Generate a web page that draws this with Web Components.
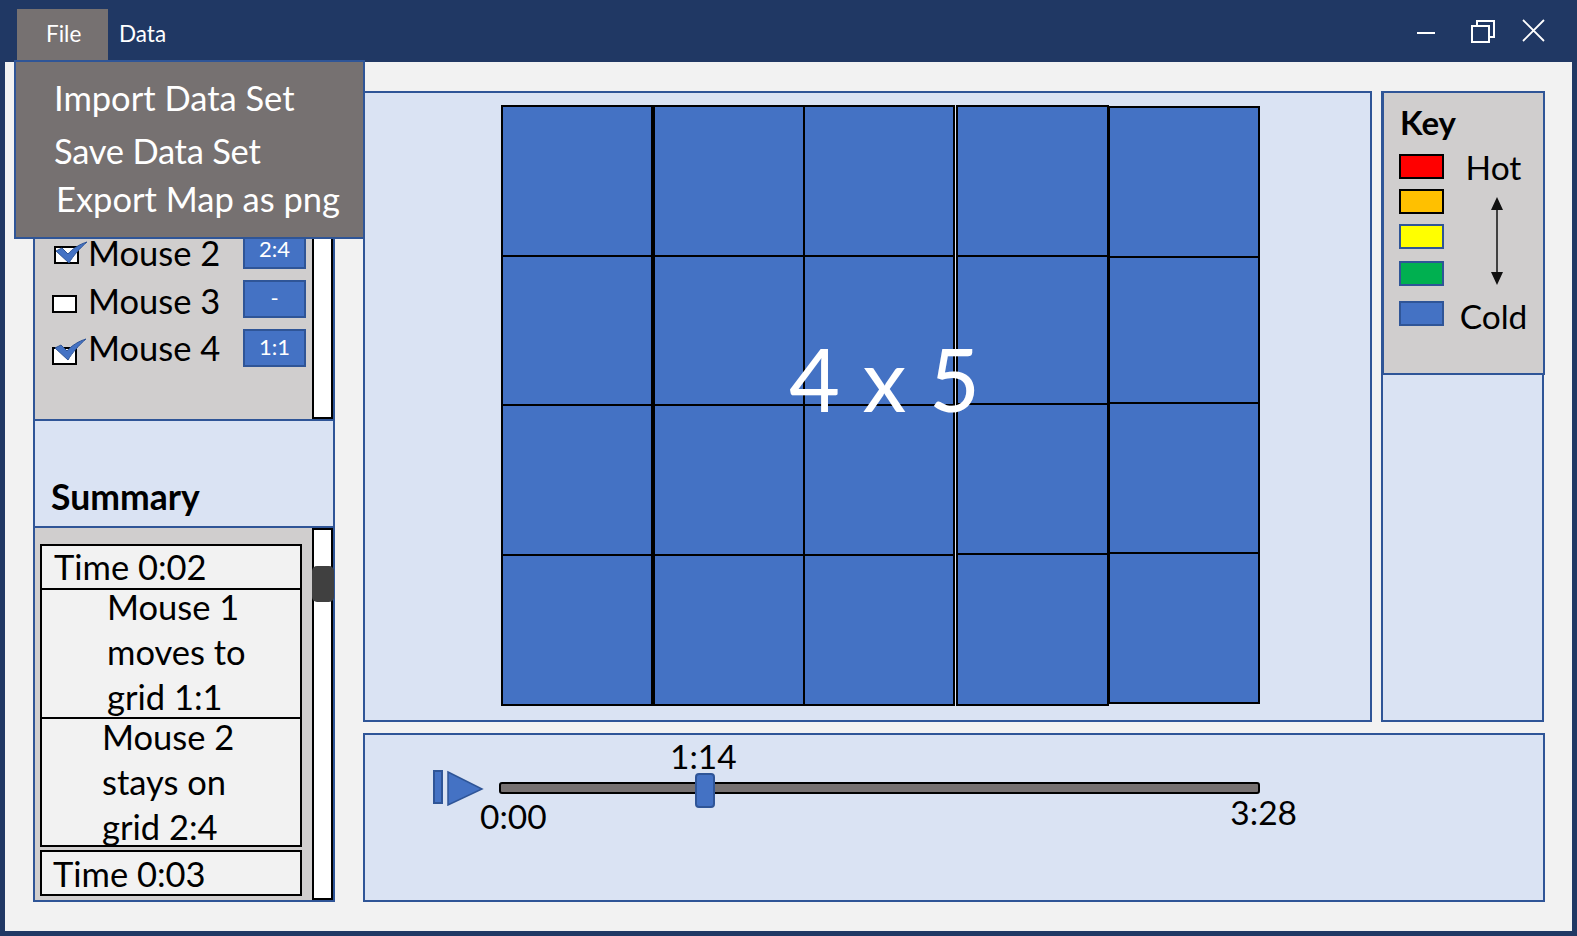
<!doctype html>
<html>
<head>
<meta charset="utf-8">
<title>Mouse heat map</title>
<style>
	html, body { margin: 0; height: 100%; }
	body { font-family: Lato, "Liberation Sans", sans-serif; color: #000; overflow: hidden; }
</style>
</head>
<body>

<app-window>
	<title-bar slot="bar"></title-bar>
	<file-menu slot="bar">
		<span>Import Data Set</span>
		<span style="margin-top: 9px; letter-spacing: -.25px">Save Data Set</span>
		<span style="margin: 4px 0 0 2px">Export Map as png</span>
	</file-menu>

	<side-panel slot="side">
		<scroll-box style="height: 328px" padding="138px 0 0 0">
			<mouse-row name="Mouse 2" badge="2:4" checked check-x="-1" check-y="-7" left="19" box="15" text="3"></mouse-row>
			<mouse-row name="Mouse 3" badge="-" left="17" box="15" text="2"></mouse-row>
			<mouse-row name="Mouse 4" badge="1:1" checked check-x="0" check-y="-11" left="17" box="18" text="0"></mouse-row>
		</scroll-box>
		<panel-heading>Summary</panel-heading>
		<scroll-box style="height: 374px" padding="16px 0 0 5px" thumb>
			<summary-item style="height: 46px" left="12" top="-2">Time 0:02</summary-item>
			<summary-item style="height: 131px; margin-top: -2px" left="65" top="-6">Mouse 1<br>moves to<br>grid 1:1</summary-item>
			<summary-item style="height: 130px; margin-top: -2px" left="60" top="-5">Mouse 2<br>stays on<br>grid 2:4</summary-item>
			<summary-item style="height: 46px; margin-top: 3px" left="11" top="-1">Time 0:03</summary-item>
		</scroll-box>
	</side-panel>

	<heat-map slot="map" label="4 x 5">
		<heat-col style="width: 152px" rows="150 149 150 150"></heat-col>
		<heat-col style="width: 152px" rows="150 149 150 150"></heat-col>
		<heat-col style="width: 152px; margin-left: -2px" rows="150 149 150 150"></heat-col>
		<heat-col style="width: 153px; margin-left: 1px" rows="150 148 150 151"></heat-col>
		<heat-col style="width: 152px; margin: 1px 0 0 -1px" rows="150 146 150 150"></heat-col>
	</heat-map>

	<key-panel slot="key"></key-panel>
	<time-slider slot="player" current="1:14" start="0:00" end="3:28"></time-slider>
</app-window>

<script>

	function define( name, css, html ) {
		customElements.define( name, class extends HTMLElement {
			constructor() {
				super()
				this.attachShadow({ mode: "open" }).innerHTML = `<style>${css}</style>${html}`
				}
			} )
		}

	define( "app-window", `
		:host {
			display: flex; flex-direction: column;
			box-sizing: border-box;
			height: 936px;
			position: relative;
			background: #f2f2f2;
			border: solid #203864;
			border-width: 0 5px 5px 5px;
			}
		.main {
			flex: 1;
			display: grid;
			grid-template-columns: 330px 1009px 173px;
			grid-template-rows: 631px 169px;
			row-gap: 11px;
			padding: 29px 27px 29px 28px;
			}
		.side { grid-row: 1 / 3; width: 302px; }
		.key { margin-left: 9px; }
		.player { grid-column: 2 / 4; }
		`, `
		<slot name="bar"></slot>
		<div class="main">
			<div class="side"><slot name="side"></slot></div>
			<div class="map"><slot name="map"></slot></div>
			<div class="key"><slot name="key"></slot></div>
			<div class="player"><slot name="player"></slot></div>
		</div>` )

	define( "title-bar", `
		:host {
			display: flex; align-items: flex-end;
			height: 62px;
			margin: 0 -5px;
			background: #203864;
			color: #fff;
			font-size: 22.5px;
			}
		.tab { height: 53px; line-height: 49px; box-sizing: border-box; }
		.file { margin-left: 17px; width: 91px; padding-left: 29px; background: #767171; }
		.data { margin-left: 11px; }
		.win { margin-left: auto; margin-bottom: 19px; margin-right: 32px; }
		svg { display: block; }
		`, `
		<div class="tab file">File</div>
		<div class="tab data">Data</div>
		<svg class="win" width="128" height="24" viewBox="0 0 128 24" fill="none" stroke="#fff" stroke-width="2">
			<path d="M0 14H18"/>
			<path d="M55 7H72V23H55Z"/>
			<path d="M60 7V2H77V18H72"/>
			<path d="M106 1L127 22M127 1L106 22" stroke-width="1.8"/>
		</svg>` )

	define( "file-menu", `
		:host {
			position: absolute; z-index: 2;
			left: 9px; top: 60px;
			box-sizing: border-box;
			width: 351px; height: 179px;
			display: flex; flex-direction: column;
			padding: 14px 0 0 38px;
			background: #767171;
			border: 2px solid #2f5597;
			color: #fff;
			font-size: 34.5px;
			line-height: 44px;
			}
		`, `<slot></slot>` )

	define( "side-panel", `
		:host {
			display: flex; flex-direction: column;
			box-sizing: border-box;
			height: 811px;
			background: #dae3f3;
			border: solid #2f5597;
			border-width: 2px 2px 0 2px;
			}
		`, `<slot></slot>` )

	define( "panel-heading", `
		:host {
			display: block;
			box-sizing: border-box;
			height: 107px;
			padding: 54px 0 0 16px;
			font-size: 35.5px; font-weight: 700;
			line-height: 44px;
			border-bottom: 2px solid #2f5597;
			}
		`, `<slot></slot>` )

	class ScrollBox extends HTMLElement {
		constructor() {
			super()
			let pad = this.getAttribute("padding") || "0"
			let thumb = this.hasAttribute("thumb") ? `<div class="thumb"></div>` : ""
			this.attachShadow({ mode: "open" }).innerHTML = `<style>
				:host {
					display: flex;
					box-sizing: border-box;
					background: #d0cece;
					border-bottom: 2px solid #2f5597;
					flex: none;
					}
				.items { flex: 1; min-width: 0; padding: ${pad}; }
				.track {
					width: 21px;
					box-sizing: border-box;
					background: #fff;
					border: 2px solid #000;
					position: relative;
					}
				.thumb {
					position: absolute;
					left: -2px; right: -3px; top: 36px; height: 36px;
					background: #404040;
					border-radius: 5px;
					}
				</style>
				<div class="items"><slot></slot></div>
				<div class="track">${thumb}</div>`
			}
		static { customElements.define( "scroll-box", this ) }
		}

	class MouseRow extends HTMLElement {
		constructor() {
			super()
			let get = n => this.getAttribute( n )
			let check = this.hasAttribute("checked") ? `<svg class="check" width="33" height="23" viewBox="0 0 33 23">
					<path d="M1 10L7 7L13 13C17 8 25 3 32 1C25 7 18 15 14 22Z" fill="#4472c4" stroke="#2f5597"/>
				</svg>` : ""
			this.attachShadow({ mode: "open" }).innerHTML = `<style>
				:host {
					display: flex;
					height: 38px; margin-bottom: 11px;
					font-size: 34.5px;
					position: relative;
					}
				.box {
					box-sizing: border-box;
					width: 25px; height: 18px;
					margin: ${get("box")}px 0 0 ${get("left")}px;
					background: #fff;
					border: 2px solid #000;
					position: relative;
					flex: none;
					}
				.check { position: absolute; left: ${get("check-x")}px; top: ${get("check-y")}px; }
				.name {
					position: absolute; left: 53px; top: ${get("text")}px;
					line-height: 38px; white-space: nowrap;
					}
				.badge {
					box-sizing: border-box;
					position: absolute; left: 208px;
					width: 63px; height: 38px;
					background: #4472c4;
					border: 2px solid #2f5597;
					color: #fff;
					font-size: 22px; line-height: 31px;
					text-align: center;
					}
				</style>
				<div class="box">${check}</div>
				<div class="name">${get("name")}</div>
				<div class="badge">${get("badge")}</div>`
			}
		static { customElements.define( "mouse-row", this ) }
		}

	class SummaryItem extends HTMLElement {
		constructor() {
			super()
			this.attachShadow({ mode: "open" }).innerHTML = `<style>
				:host {
					display: block;
					box-sizing: border-box;
					width: 262px;
					padding-left: ${this.getAttribute("left")}px;
					background: #f2f2f2;
					border: 2px solid #000;
					font-size: 34.5px;
					line-height: 45px;
					}
				div { margin-top: ${this.getAttribute("top")}px; }
				</style><div><slot></slot></div>`
			}
		static { customElements.define( "summary-item", this ) }
		}

	class HeatMap extends HTMLElement {
		constructor() {
			super()
			this.attachShadow({ mode: "open" }).innerHTML = `<style>
				:host {
					display: flex; align-items: flex-start;
					box-sizing: border-box;
					height: 100%;
					padding: 12px 0 0 136px;
					background: #dae3f3;
					border: 2px solid #2f5597;
					position: relative;
					}
				.label {
					position: absolute;
					left: 424px; top: 235px;
					color: #fff;
					font-size: 88px; line-height: 100px;
					white-space: nowrap;
					}
				</style>
				<slot></slot>
				<div class="label">${this.getAttribute("label")}</div>`
			}
		static { customElements.define( "heat-map", this ) }
		}

	class HeatCol extends HTMLElement {
		constructor() {
			super()
			let rows = this.getAttribute("rows").split(" ")
			let cells = rows.map( h => `<div class="cell" style="height: ${h}px"></div>` ).join("")
			this.attachShadow({ mode: "open" }).innerHTML = `<style>
				:host { display: block; box-sizing: border-box; flex: none; border-bottom: 2px solid #000; }
				.cell {
					box-sizing: border-box;
					background: #4472c4;
					border: solid #000;
					border-width: 2px 2px 0 2px;
					}
				</style>${cells}`
			}
		static { customElements.define( "heat-col", this ) }
		}

	define( "key-panel", `
		:host {
			display: block;
			box-sizing: border-box;
			height: 100%;
			background: #dae3f3;
			border: solid #2f5597;
			border-width: 0 2px 2px 2px;
			margin-right: 1px;
			}
		.card {
			box-sizing: border-box;
			height: 284px; margin: 0 -3px 0 -2px;
			padding: 11px 0 0 15px;
			background: #d0cece;
			border: 2px solid #2f5597;
			border-left-width: 3px;
			}
		.title { font-size: 33px; font-weight: 700; line-height: 36px; margin-left: 1px; }
		.body { display: flex; margin-top: 14px; }
		.swatches { display: flex; flex-direction: column; }
		.swatches div { box-sizing: border-box; width: 45px; height: 25px; border: 2px solid #2f5597; }
		.labels {
			flex: 1;
			display: flex; flex-direction: column; align-items: center;
			font-size: 33.5px; line-height: 40px;
			}
		.hot { margin-top: -7px; }
		.cold { margin-top: 11px; }
		svg { display: block; margin: 10px 0 0 7px; }
		`, `
		<div class="card">
			<div class="title">Key</div>
			<div class="body">
				<div class="swatches">
					<div style="background: #ff0000; border-color: #000"></div>
					<div style="background: #ffc000; border-color: #000; margin-top: 10px"></div>
					<div style="background: #ffff00; margin-top: 10px"></div>
					<div style="background: #00b050; margin-top: 12px"></div>
					<div style="background: #4472c4; margin-top: 15px"></div>
				</div>
				<div class="labels">
					<div class="hot">Hot</div>
					<svg width="14" height="88" viewBox="0 0 14 88">
						<path d="M7 10V78" stroke="#111" stroke-width="1.5"/>
						<path d="M7 0L13 13H1ZM7 88L13 75H1Z" fill="#111"/>
					</svg>
					<div class="cold">Cold</div>
				</div>
			</div>
		</div>` )

	class TimeSlider extends HTMLElement {
		constructor() {
			super()
			let get = n => this.getAttribute( n )
			this.attachShadow({ mode: "open" }).innerHTML = `<style>
				:host {
					display: block;
					box-sizing: border-box;
					height: 100%;
					padding: 1px 0 0 68px;
					background: #dae3f3;
					border: 2px solid #2f5597;
					font-size: 33.5px;
					line-height: 40px;
					}
				.now { padding-left: 237px; height: 32px; }
				.row { display: flex; align-items: center; height: 36px; margin-top: 1px; }
				.play { flex: none; margin-top: 2px; }
				.track {
					flex: none;
					box-sizing: border-box;
					width: 761px; height: 12px;
					margin: 1px 0 0 14px;
					background: #767171;
					border: 2px solid #000;
					border-radius: 3px;
					position: relative;
					}
				.thumb {
					position: absolute;
					left: 194px; top: -11px;
					box-sizing: border-box;
					width: 20px; height: 35px;
					background: #4472c4;
					border: 2px solid #2f5597;
					border-radius: 4px;
					}
				.ends { display: flex; justify-content: space-between; width: 817px; margin: -9px 0 0 47px; }
				.ends span + span { margin-top: -4px; }
				</style>
				<div class="now">${get("current")}</div>
				<div class="row">
					<svg class="play" width="52" height="36" viewBox="0 0 52 36">
						<path d="M1 1H9V33H1Z" fill="#4472c4" stroke="#2f5597" stroke-width="2"/>
						<path d="M15 2L49 19L15 35Z" fill="#4472c4" stroke="#2f5597" stroke-width="1.5"/>
					</svg>
					<div class="track"><div class="thumb"></div></div>
				</div>
				<div class="ends"><span>${get("start")}</span><span>${get("end")}</span></div>`
			}
		static { customElements.define( "time-slider", this ) }
		}

	</script>
</body>
</html>
